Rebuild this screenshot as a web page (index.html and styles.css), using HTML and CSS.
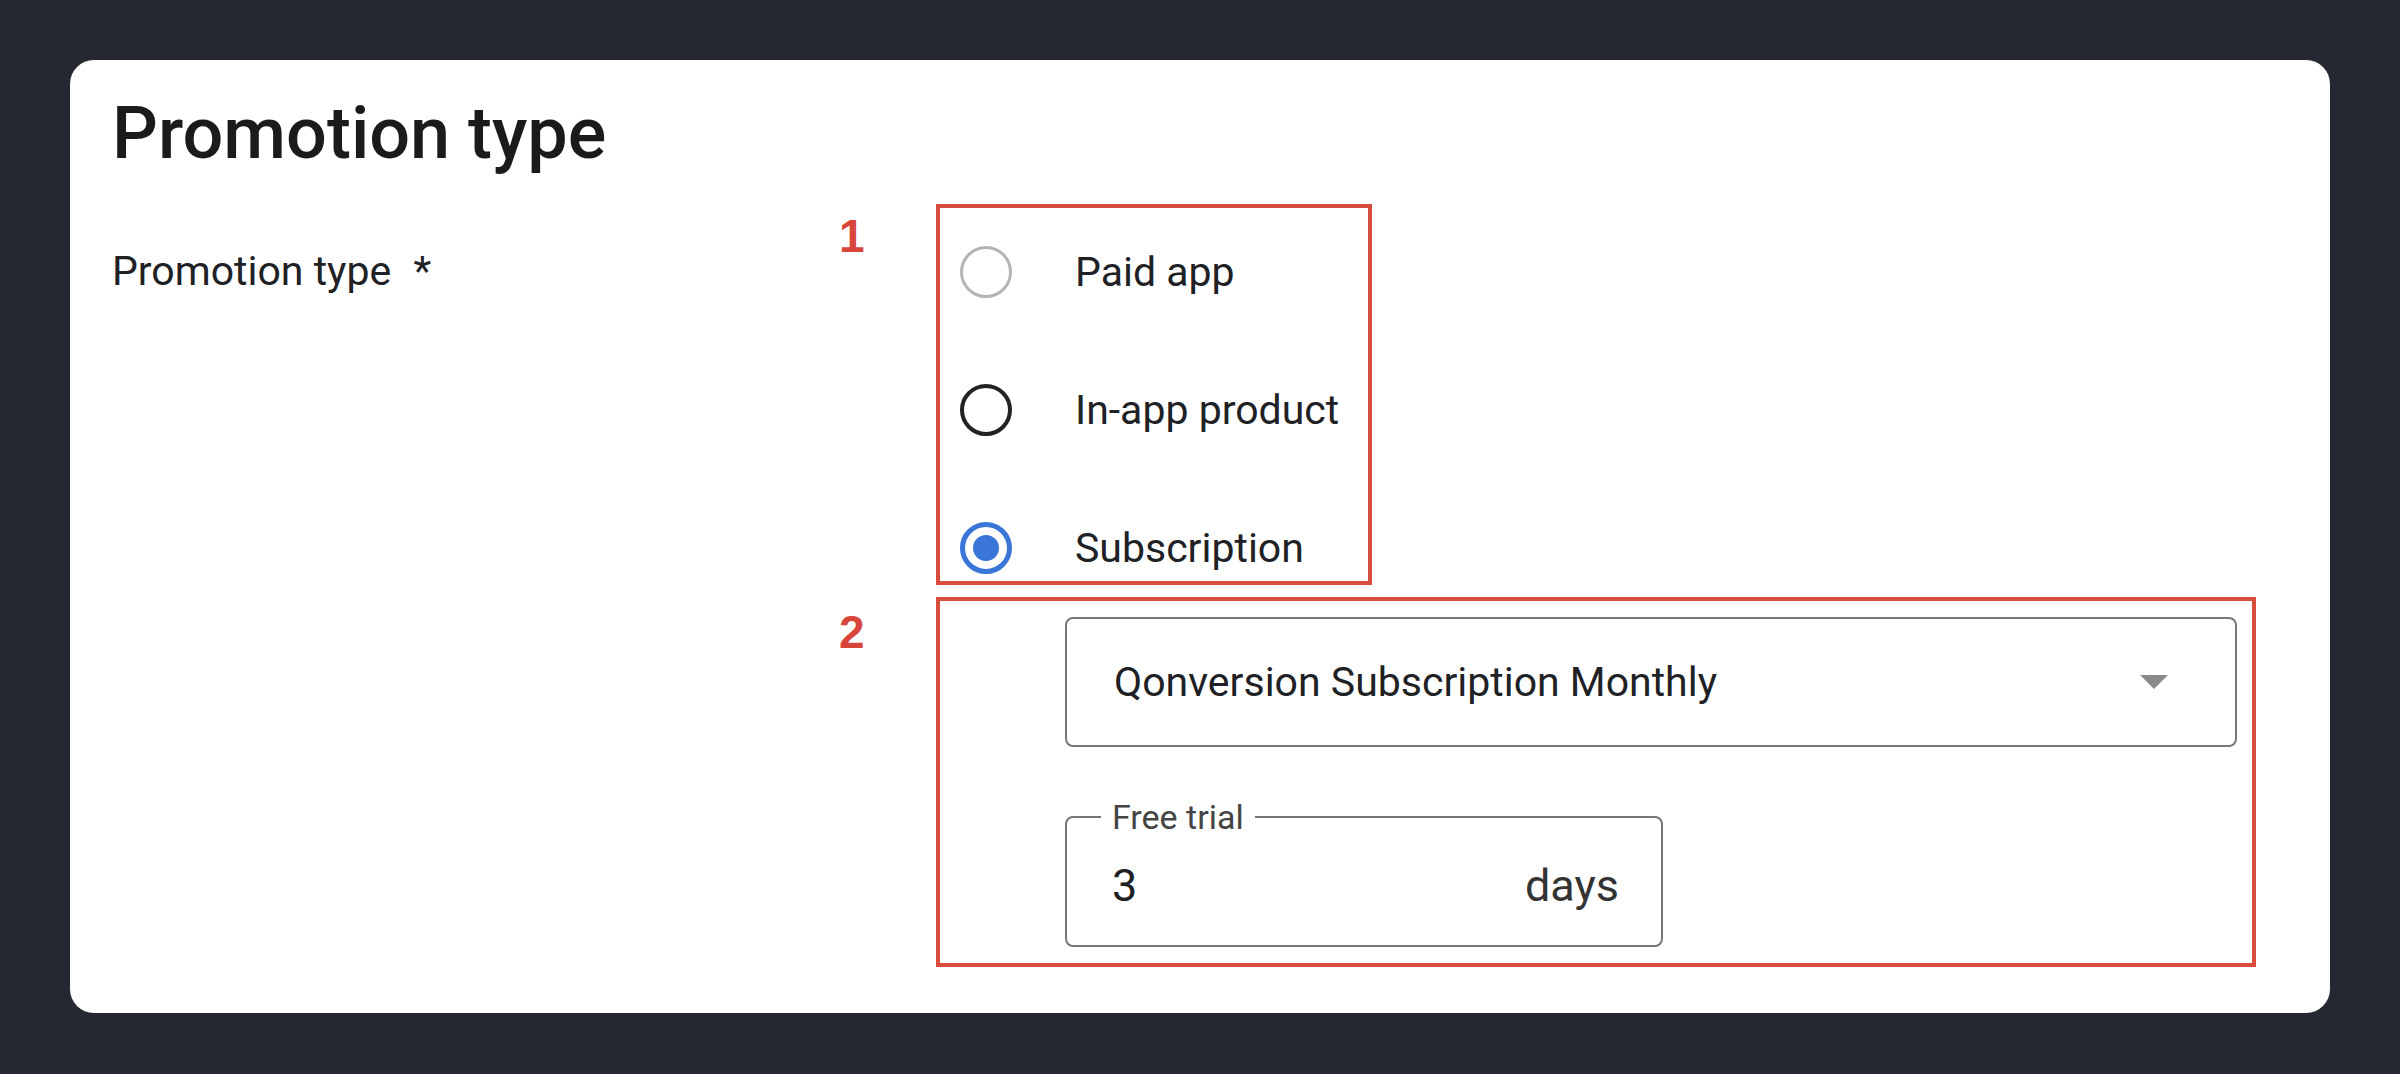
FILE: index.html
```html
<!DOCTYPE html>
<html>
<head>
    <link rel="stylesheet" href="styles.css">
    <title>Promotion type</title>
</head>
<body>
    <div class="card">
        <h1 class="title">Promotion type</h1>
        <div class="form">
            <div class="fieldLabel">Promotion type <span class="req">*</span></div>
            <div class="mark mark1">1</div>
            <div class="box box1">
                <label class="option">
                    <span class="radio radioOff"></span>
                    <span class="optText">Paid app</span>
                </label>
                <label class="option">
                    <span class="radio radioDark"></span>
                    <span class="optText">In-app product</span>
                </label>
                <label class="option">
                    <span class="radio radioOn"></span>
                    <span class="optText">Subscription</span>
                </label>
            </div>
            <div class="mark mark2">2</div>
            <div class="box box2">
                <div class="select">
                    <span class="selectText">Qonversion Subscription Monthly</span>
                    <span class="arrow"></span>
                </div>
                <fieldset class="trial">
                    <legend>Free trial</legend>
                    <span class="trialValue">3</span>
                    <span class="trialUnit">days</span>
                </fieldset>
            </div>
        </div>
    </div>
</body>
</html>
```

FILE: styles.css
```css
*{
    margin: 0px;
    padding: 0px;
    box-sizing: border-box;
}
body{
    background-color: #252830;
    font-family: Roboto, "Liberation Sans", sans-serif;
    color: #202124;
}
.card{
    margin: 60px 0px 0px 70px;
    width: 2260px;
    height: 953px;
    background-color: #fff;
    border-radius: 24px;
    padding: 38px 0px 0px 42px;
}
.title{
    font-size: 72px;
    line-height: 72px;
    font-weight: 500;
    color: #1b1b1b;
}
.form{
    display: grid;
    grid-template-columns: 727px 97px auto;
    row-gap: 12px;
    margin-top: 34px;
}
.fieldLabel{
    font-size: 41px;
    line-height: 48px;
    margin-top: 43px;
}
.req{
    margin-left: 12px;
}
.mark{
    font-family: "Liberation Sans", Arial, sans-serif;
    font-weight: bold;
    font-size: 46px;
    line-height: 46px;
    color: #d8453a;
}
.mark1{
    margin-top: 9px;
}
.mark2{
    grid-column: 2;
    margin-top: 12px;
}
.box{
    border: 4px solid #d94c3e;
}
.box1{
    width: 436px;
    height: 381px;
    padding: 38px 0px 0px 20px;
    display: flex;
    flex-direction: column;
    gap: 86px;
}
.option{
    display: flex;
    align-items: center;
    gap: 63px;
    height: 52px;
}
.optText{
    font-size: 41px;
    line-height: 48px;
}
.radio{
    width: 52px;
    height: 52px;
    border-radius: 50%;
    flex-shrink: 0;
    display: flex;
    align-items: center;
    justify-content: center;
}
.radioOff{
    border: 3px solid #b4b4b4;
}
.radioDark{
    border: 4px solid #222;
}
.radioOn{
    border: 5px solid #3a76d8;
}
.radioOn::after{
    content: "";
    width: 26px;
    height: 26px;
    border-radius: 50%;
    background-color: #3a76d8;
}
.box2{
    width: 1320px;
    height: 370px;
    padding: 16px 15px 0px 125px;
}
.select{
    height: 130px;
    border: 2px solid #777;
    border-radius: 8px;
    display: flex;
    align-items: center;
    justify-content: space-between;
    padding: 0px 67px 0px 47px;
}
.selectText{
    font-size: 41px;
    line-height: 48px;
}
.arrow{
    width: 0px;
    height: 0px;
    border-left: 14px solid transparent;
    border-right: 14px solid transparent;
    border-top: 14px solid #8a8a8a;
}
.trial{
    margin-top: 53px;
    width: 598px;
    border: 2px solid #777;
    border-radius: 8px;
    padding: 25px 42px 32px 45px;
    display: flex;
    justify-content: space-between;
    font-size: 45px;
    line-height: 54px;
}
.trial legend{
    font-size: 34px;
    line-height: 34px;
    color: #444;
    padding: 0px 11px;
    margin-left: -11px;
}
.trialUnit{
    color: #333;
}
```
